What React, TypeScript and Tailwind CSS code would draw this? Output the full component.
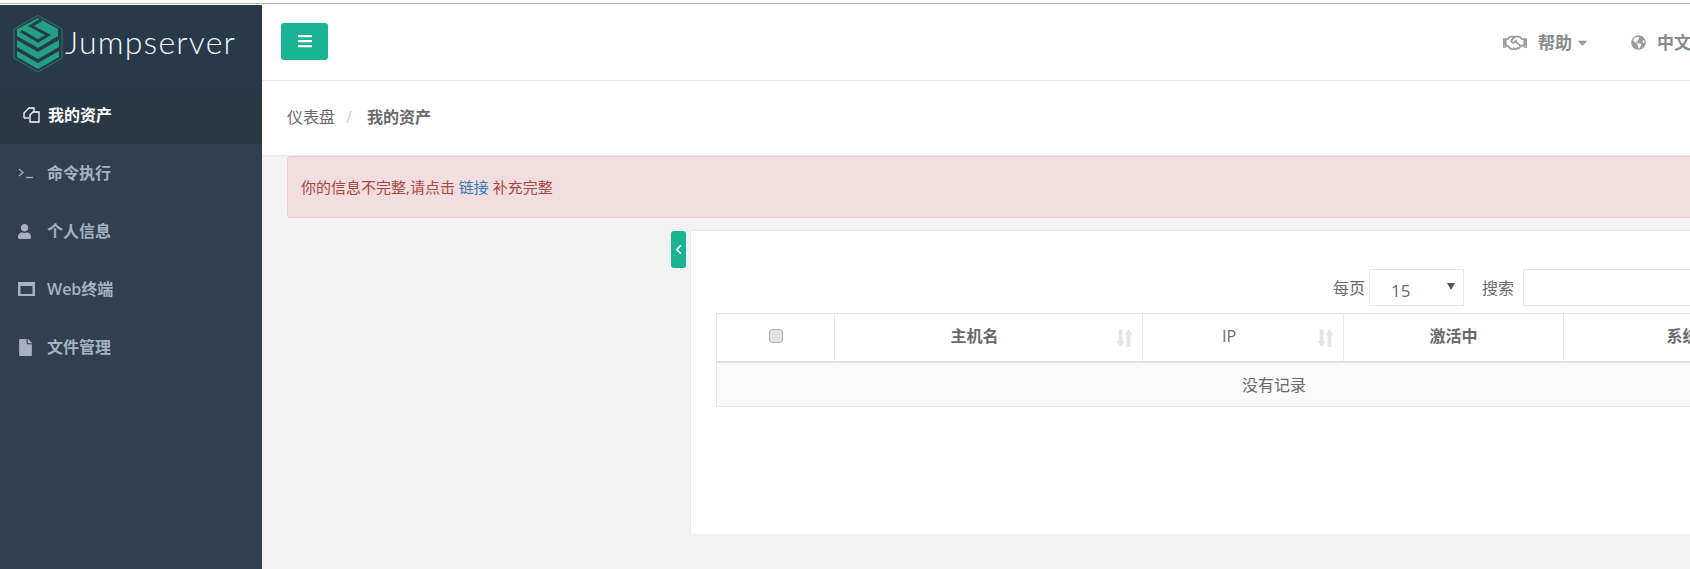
import { FaBars, FaCaretDown, FaChevronLeft, FaFile, FaGlobeAmericas, FaRegHandshake, FaUser } from "react-icons/fa";
import type { ReactNode } from "react";

const cjk = "font-['Open_Sans','Noto_Sans_CJK_SC',sans-serif]";

function Logo() {
  return (
    <svg width="50" height="58" viewBox="0 0 50 58" className="shrink-0">
      <polygon points="25,0.500 49,14 49,43 25,57 1,43 1,14" fill="none" stroke="#2a7a76" strokeWidth="1" />
      {/* stacked chevrons */}
      <polygon points="4,36 25,48 46,36 46,42 25,54 4,42" fill="#23a084" />
      <polygon points="4,25 25,37 46,25 46,32 25,44 4,32" fill="#23a084" />
      <polygon points="25,3 45,14 45,21 25,33 4,21 4,14" fill="#23a084" />
      <path d="M8 16 L25 26 L35 20 L18 11 L28 5" fill="none" stroke="#283a4a" strokeWidth="3" />
    </svg>
  );
}

function NavRow({ icon, label }: { icon: ReactNode; label: string }) {
  return (
    <div className="h-[58px] flex items-center pl-[18px] text-[#a7b1c2] text-[16px] font-semibold">
      <span className="w-[29px] flex items-center">{icon}</span>
      <span>{label}</span>
    </div>
  );
}

function SortArrows() {
  return (
    <svg width="17" height="20" viewBox="0 0 16 18" className="absolute right-[9px] top-[14px]" fill="#e4e4e4">
      <path d="M2.500 1h3.500v11h2L4.250 17.500 .5 12h2z" />
      <path d="M10 17.500h3.500V6.500h2L11.750.5 8 6.500h2z" />
    </svg>
  );
}

function HeadCell({ className, children }: { className: string; children?: ReactNode }) {
  return (
    <div className={`relative shrink-0 flex items-center justify-center pb-[4px] border-r border-[#e7e7e7] ${className}`}>
      {children}
    </div>
  );
}

export default function App() {
  return (
    <div className={`w-[1690px] h-[569px] overflow-hidden flex flex-col bg-[#f3f3f4] text-[#676a6c] ${cjk}`}>
      <div className="h-[5px] shrink-0 bg-white">
        <div className="h-[3px]" />
        <div className="h-px bg-[#b4b4b4]" />
      </div>

      <div className="flex flex-1 min-h-0">
        <aside className="w-[262px] shrink-0 bg-[#2f4050]">
          <div className="h-[81px] bg-[#283a4a] flex items-start pl-[13px] pt-[10px]">
            <Logo />
            <span className="font-['Lato',sans-serif] font-light text-[#f2f5f7] text-[32px] leading-[40px] mt-[7px] ml-[2px] tracking-[1.2px]">
              Jumpserver
            </span>
          </div>
          <div className="h-[58px] bg-[#293846] flex items-center pl-[23px] text-white text-[16px] font-semibold">
            <svg width="17" height="16" viewBox="0 0 17 16" fill="none" stroke="#ffffff" strokeWidth="1.300" className="mr-[8px]">
              <path d="M1 11V6l5-5h5v4" />
              <path d="M1 11h5" />
              <path d="M7 8l3-3h6v10H7z" />
            </svg>
            <span>我的资产</span>
          </div>
          <NavRow
            icon={
              <svg width="16" height="12" viewBox="0 0 16 12" fill="none" stroke="#a7b1c2" strokeWidth="1.3">
                <path d="M1 2l4 3.500L1 9" />
                <path d="M8 10.500h7" />
              </svg>
            }
            label="命令执行"
          />
          <NavRow icon={<FaUser className="w-[13px] h-[15px]" />} label="个人信息" />
          <NavRow
            icon={
              <svg width="17" height="14" viewBox="0 0 17 14" fill="#a7b1c2">
                <path fillRule="evenodd" d="M0 0h17v14H0zM2.500 4v8h12V4z" />
              </svg>
            }
            label="Web终端"
          />
          <NavRow icon={<FaFile className="w-[15px] h-[17px]" />} label="文件管理" />
        </aside>

        <main className="flex-1 min-w-0 flex flex-col">
          <header className="h-[76px] shrink-0 bg-white border-b border-[#e7eaec] flex items-center pl-[19px] pr-0">
            <button className="w-[47px] h-[37px] -mt-[3px] rounded-[3px] bg-[#1ab394] text-white flex items-center justify-center">
              <FaBars className="w-[16px] h-[16px]" />
            </button>
            <div className="ml-auto flex items-center text-[#999c9e] text-[17px] font-bold mr-[-1px]">
              <FaRegHandshake className="w-[24px] h-[24px] text-[#999c9e]" />
              <span className="ml-[11px] text-[#888b8d]">帮助</span>
              <FaCaretDown className="ml-[3px] w-[15px] h-[15px]" />
              <FaGlobeAmericas className="ml-[41px] w-[15px] h-[15px]" />
              <span className="ml-[11px] text-[#888b8d]">中文</span>
            </div>
          </header>

          <div className="h-[75px] shrink-0 bg-white border-b border-[#e7eaec] flex items-center pl-[25px] text-[16px] pb-[2px]">
            <span>仪表盘</span>
            <span className="ml-[11px] text-[#cccccc]">/</span>
            <strong className="ml-[15px] font-semibold">我的资产</strong>
          </div>

          <div className="flex-1 min-h-0 pl-[25px]">
            <div className="h-[62px] bg-[#f2dede] border border-[#ebccd1] rounded-l-[4px] flex items-center pl-[13px] text-[#a94442] text-[15px] border-r-0">
              你的信息不完整,请点击&nbsp;<a className="text-[#337ab7]">链接</a>&nbsp;补充完整
            </div>

            <div className="flex mt-[12px] h-[304px]">
              <div className="w-[403px] shrink-0 flex justify-end pr-[4px]">
                <div className="w-[15px] h-[37px] mt-[1px] rounded-[3px] bg-[#1ab394] text-white flex items-center justify-center">
                  <FaChevronLeft className="w-[9px] h-[11px]" />
                </div>
              </div>

              <section className="flex-1 min-w-0 bg-white border-l border-t border-[#e7e7e7] pl-[25px] pt-[38px]">
                <div className="flex items-center justify-end h-[37px] text-[16px] -mr-[133px]">
                  <span>每页</span>
                  <div className="relative w-[95px] h-[37px] ml-[4px] border border-[#e5e6e7] text-[#676a6c]">
                    <span className="absolute left-[21px] top-[9px] text-[17px] leading-[24px]">15</span>
                    <span className="absolute right-[8px] top-[13px] w-0 h-0 border-x-[4px] border-x-transparent border-t-[7px] border-t-[#555]" />
                  </div>
                  <span className="ml-[18px]">搜索</span>
                  <div className="w-[300px] h-[37px] ml-[9px] border border-[#e5e6e7]" />
                </div>

                <div className="w-[1200px] mt-[7px] border border-[#e7e7e7]">
                  <div className="flex h-[49px] border-b-2 border-[#e0e0e0] text-[16px]">
                    <HeadCell className="w-[118px]">
                      <span className="w-[14px] h-[14px] rounded-[3px] bg-[#e2e2e2] border border-[#b5b5b5]" />
                    </HeadCell>
                    <HeadCell className="w-[308px] font-semibold pr-[28px]">
                      主机名
                      <SortArrows />
                    </HeadCell>
                    <HeadCell className="w-[201px] pr-[28px]">
                      IP
                      <SortArrows />
                    </HeadCell>
                    <HeadCell className="w-[220px] font-semibold">激活中</HeadCell>
                    <HeadCell className="w-[270px] font-semibold">系统用户</HeadCell>
                  </div>
                  <div className="h-[43px] bg-[#f9f9f9] flex items-center text-[16px] pl-[525px]">没有记录</div>
                </div>
              </section>
            </div>
          </div>
        </main>
      </div>
    </div>
  );
}
